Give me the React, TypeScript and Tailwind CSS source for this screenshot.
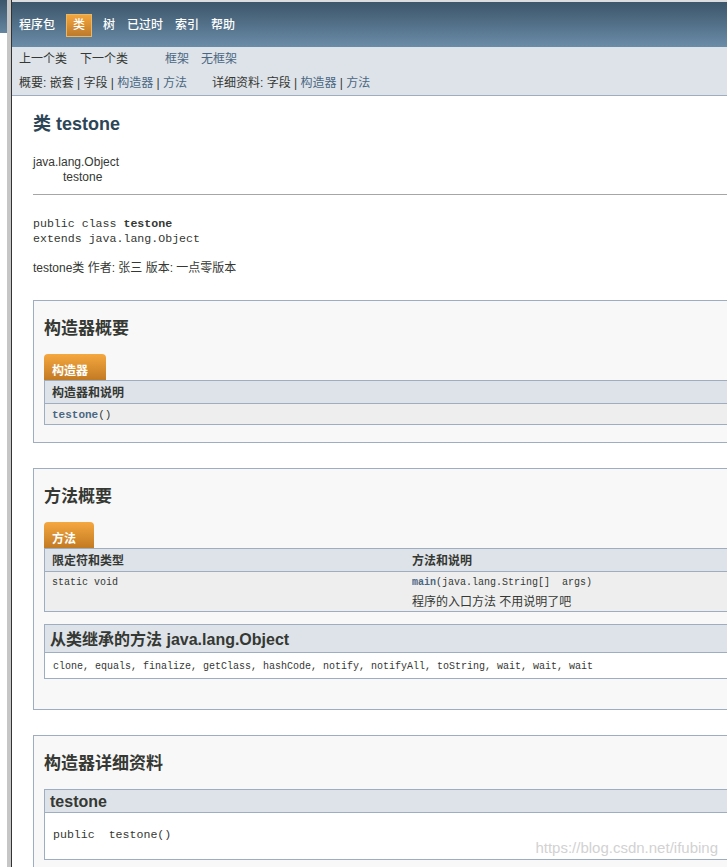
import type { ReactNode } from "react";

const sans = "font-['Liberation_Sans','Noto_Sans_CJK_SC',sans-serif]";
const mono = "font-['Liberation_Mono','Noto_Sans_CJK_SC',monospace]";

const navItems = ["程序包", "类", "树", "已过时", "索引", "帮助"];

function Block({ title, children, className = "" }: { title: string; children: ReactNode; className?: string }) {
  return (
    <section className={`border-y border-l border-[#9eadc0] bg-[#f8f8f8] pl-[10px] pt-[18px] ${className}`}>
      <h3 className="mb-[15px] text-[17px] leading-5 font-bold text-[#353833]">{title}</h3>
      {children}
    </section>
  );
}

function Tab({ label }: { label: string }) {
  return (
    <div className="flex">
      <span className="h-[26px] rounded-t-[4px] bg-gradient-to-b from-[#f6a83f] to-[#c27a23] pl-2 pr-[18px] pt-[9px] text-[12px] leading-4 font-bold text-white">
        {label}
      </span>
    </div>
  );
}

export default function App() {
  return (
    <div className={`relative flex h-[867px] overflow-hidden bg-white text-[12px] text-[#353833] ${sans}`}>
      {/* left frame + splitter */}
      <div className="w-[7px] shrink-0">
        <div className="h-[33px] bg-gradient-to-b from-[#3c566b] to-[#6485a0]" />
      </div>
      <div className="w-[4px] shrink-0 bg-[#c6c6c6]" />
      <div className="w-px shrink-0 bg-[#333333]" />

      <div className="min-w-0 flex-1">
        <div className="border-t-2 border-[#dcdddf]">
          <nav className="flex h-[45px] items-center bg-gradient-to-b from-[#3c566b] to-[#6b8ca8] pl-px pt-px text-[12px] font-medium text-white">
            {navItems.map((n) =>
              n === "类" ? (
                <span key={n} className="mx-[5px] flex h-[23px] items-center border border-[#e9b865] bg-gradient-to-b from-[#f5a63c] to-[#bd7a2c] px-[6px]">
                  {n}
                </span>
              ) : (
                <span key={n} className="px-[6px]">{n}</span>
              )
            )}
          </nav>
        </div>

        <div className="h-[49px] border-b border-[#9eadc0] bg-[#dee3e9] pl-[7px] pt-[2px]">
          <div className="flex h-5 items-center">
            <span>上一个类</span>
            <span className="ml-[13px]">下一个类</span>
            <a className="ml-[37px] text-[#4a6782]">框架</a>
            <a className="ml-[12px] text-[#4a6782]">无框架</a>
          </div>
          <div className="mt-1 flex h-5 items-center whitespace-pre">
            <span className="w-[193px]">
              概要: 嵌套 | 字段 | <a className="text-[#4a6782]">构造器</a> | <a className="text-[#4a6782]">方法</a>
            </span>
            <span>
              详细资料: 字段 | <a className="text-[#4a6782]">构造器</a> | <a className="text-[#4a6782]">方法</a>
            </span>
          </div>
        </div>

        <main className="pl-[21px]">
          <h2 className="mt-4 text-[18px] leading-6 font-bold text-[#2c4557]">类 testone</h2>
          <div className="mt-[19px] leading-[15px]">
            <div>java.lang.Object</div>
            <div className="pl-[30px]">testone</div>
          </div>
          <div className="mt-[9px] border-t border-[#a6a6a6]" />
          <pre className={`mt-[21px] text-[11.6px] leading-[15px] ${mono}`}>
            public class <b>testone</b>
            {"\n"}extends java.lang.Object
          </pre>
          <p className="mt-[14px] leading-4">testone类 作者: 张三 版本: 一点零版本</p>

          <Block title="构造器概要" className="mt-[24px] pb-[17px]">
            <Tab label="构造器" />
            <div className="border-y border-l border-[#9eadc0]">
              <div className="h-[22px] bg-[#dee3e9] pl-[7px] pt-px leading-[22px] font-semibold">构造器和说明</div>
              <div className={`h-[21px] border-t border-[#9eadc0] bg-[#eeeeef] pl-[7px] pt-px text-[11px] leading-5 ${mono}`}>
                <b className="text-[#4a6782]">testone</b>()
              </div>
            </div>
          </Block>

          <Block title="方法概要" className="mt-[25px] pb-[30px]">
            <Tab label="方法" />
            <div className="border-y border-l border-[#9eadc0]">
              <div className="grid h-[22px] grid-cols-[360px_1fr] bg-[#dee3e9] pt-px leading-[22px] font-semibold">
                <span className="px-[7px]">限定符和类型</span>
                <span className="px-[7px]">方法和说明</span>
              </div>
              <div className="grid h-[40px] grid-cols-[360px_1fr] border-t border-[#9eadc0] bg-[#eeeeef]">
                <span className={`px-[7px] pt-[2px] text-[10px] leading-[18px] ${mono}`}>static void</span>
                <div className="px-[7px] pt-[2px]">
                  <div className={`whitespace-pre text-[10px] leading-[18px] ${mono}`}>
                    <b className="text-[#4a6782]">main</b>(java.lang.String[]  args)
                  </div>
                  <div className="leading-5">程序的入口方法 不用说明了吧</div>
                </div>
              </div>
            </div>
            <div className="mt-3 border-y border-l border-[#9eadc0]">
              <h3 className="h-[27px] bg-[#dee3e9] pl-[5px] pt-px text-[16px] leading-[27px] font-bold">从类继承的方法 java.lang.Object</h3>
              <div className={`h-[26px] border-t border-[#9eadc0] bg-white pl-2 pt-px text-[10px] leading-[25px] whitespace-pre ${mono}`}>
                clone, equals, finalize, getClass, hashCode, notify, notifyAll, toString, wait, wait, wait
              </div>
            </div>
          </Block>

          <Block title="构造器详细资料" className="mt-[25px] pb-6">
            <div className="border-y border-l border-[#9eadc0]">
              <h4 className="h-[22px] bg-[#dee3e9] pl-[5px] pt-px text-[16px] leading-[22px] font-bold">testone</h4>
              <div className={`h-[47px] border-t border-[#9eadc0] bg-white pl-2 pt-[14px] text-[11.6px] leading-4 whitespace-pre ${mono}`}>
                public  testone()
              </div>
            </div>
          </Block>
        </main>
      </div>

      <span className="absolute right-[9px] bottom-[10px] text-[15px] leading-[18px] text-[#d2d2d2]">https://blog.csdn.net/ifubing</span>
    </div>
  );
}
